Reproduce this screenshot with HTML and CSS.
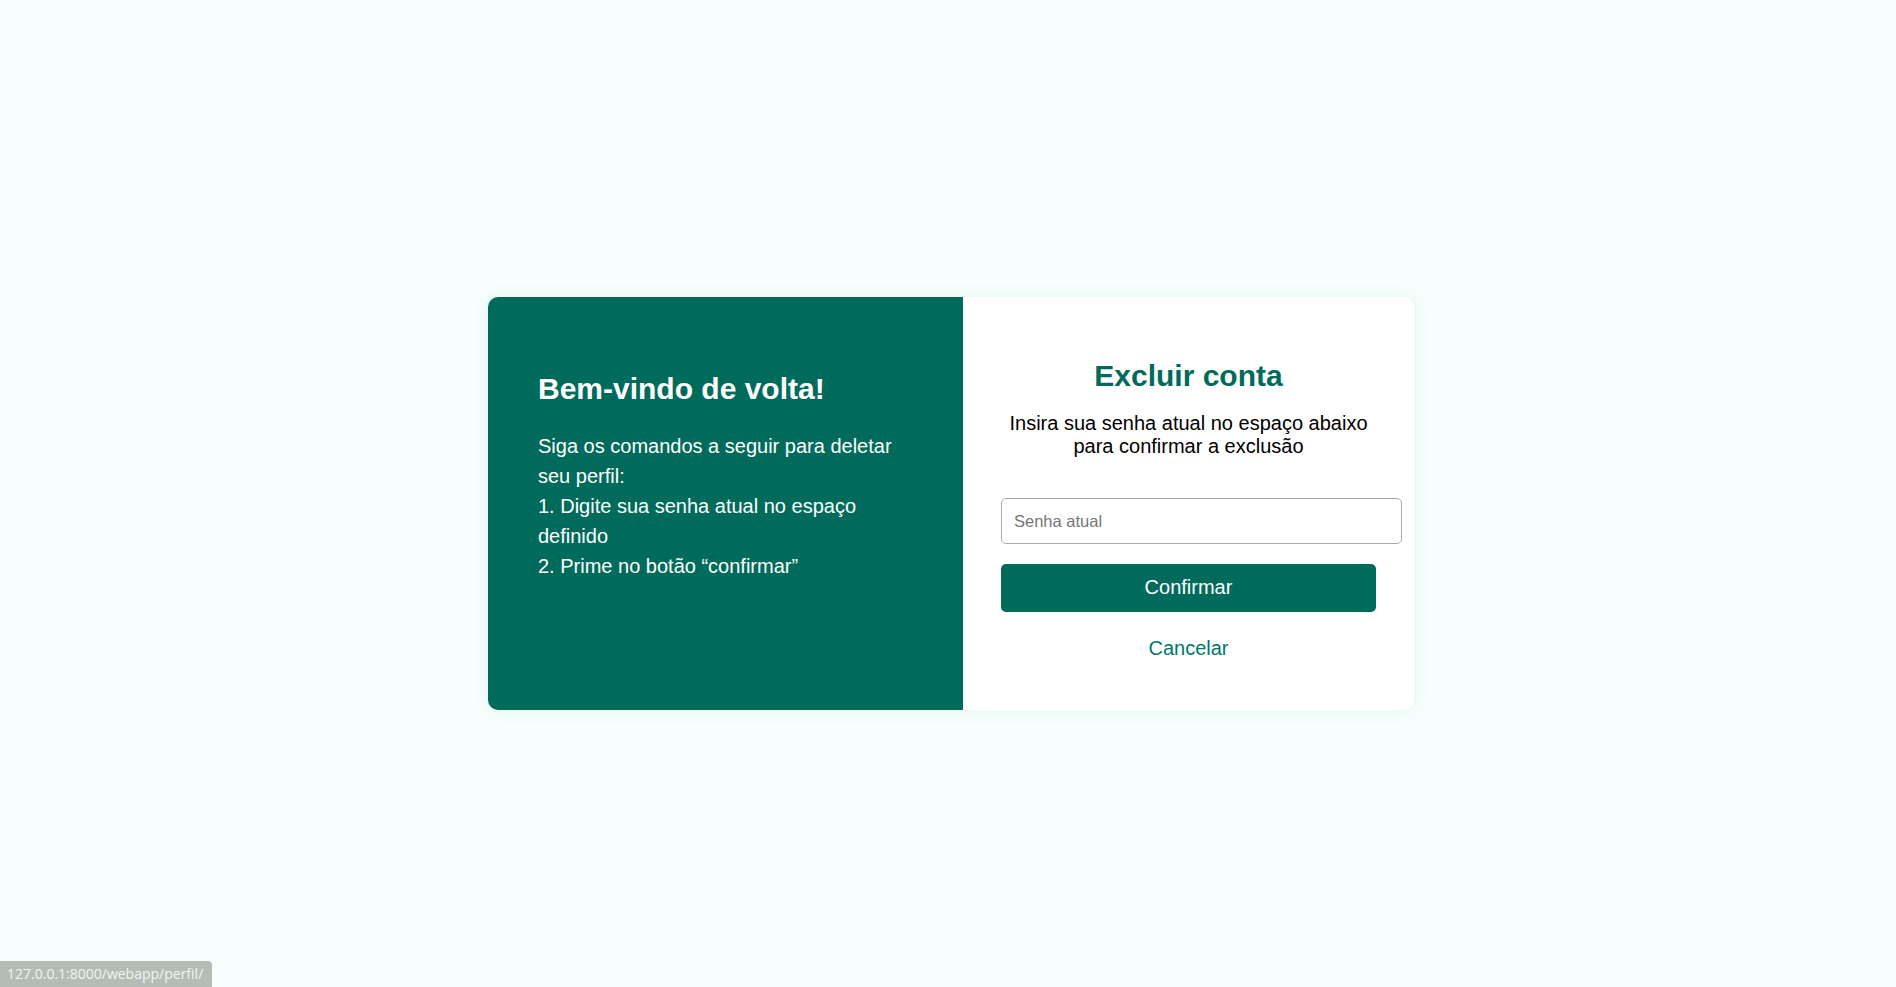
FILE: index.html
```html
<!DOCTYPE html>
<html lang="pt-BR">
<head>
<meta charset="utf-8">
<title>Excluir conta</title>
<link rel="stylesheet" href="styles.css">
</head>
<body>
<div class="page">
  <div class="card">
    <section class="panel-info">
      <h2 class="info-title">Bem-vindo de volta!</h2>
      <p class="info-text">Siga os comandos a seguir para deletar seu perfil:<br>1. Digite sua senha atual no espaço definido<br>2. Prime no botão “confirmar”</p>
    </section>
    <section class="panel-form">
      <h2 class="form-title">Excluir conta</h2>
      <p class="form-text">Insira sua senha atual no espaço abaixo para confirmar a exclusão</p>
      <form class="form" onsubmit="return false;">
        <input class="field" type="password" placeholder="Senha atual">
        <button class="btn-confirm" type="submit">Confirmar</button>
      </form>
      <a class="link-cancel" href="#">Cancelar</a>
    </section>
  </div>
</div>
<div class="status-bar">127.0.0.1:8000/webapp/perfil/</div>
</body>
</html>
```
FILE: styles.css
```css
html, body {
  margin: 0;
  padding: 0;
}
body {
  background: #f6fffd;
  font-family: "Liberation Sans", Arial, sans-serif;
}
.page {
  box-sizing: border-box;
  height: 100vh;
  padding: 20px 0 0 6px;
  display: flex;
  justify-content: center;
  align-items: center;
}
.card {
  display: flex;
  width: 926px;
  border-radius: 10px;
  overflow: hidden;
  box-shadow: 0 0 18px rgba(0, 90, 70, 0.08);
}
.panel-info {
  box-sizing: border-box;
  width: 475px;
  flex: none;
  background: #006b5b;
  color: #ffffff;
  padding: 50px;
}
.info-title {
  font-size: 30px;
  font-weight: bold;
  margin: 25px 0;
  line-height: normal;
}
.info-text {
  font-size: 20px;
  line-height: 30px;
  margin: 20px 0;
}
.panel-form {
  box-sizing: border-box;
  width: 451px;
  min-width: 0;
  flex: none;
  background: #ffffff;
  padding: 62px 38px 50px;
  text-align: center;
}
.form-title {
  font-size: 30px;
  font-weight: bold;
  color: #006b5b;
  margin: 0 0 19px;
  line-height: normal;
}
.form-text {
  font-size: 20px;
  color: #000000;
  margin: 0 0 40px;
  line-height: normal;
}
.form {
  margin: 0;
  width: 375px;
}
.field {
  display: block;
  box-sizing: content-box;
  width: 375px;
  height: 44px;
  padding: 0 12px;
  border: 1px solid #a9a9a9;
  border-radius: 5px;
  font-family: "Liberation Sans", Arial, sans-serif;
  font-size: 16.5px;
  color: #222;
  background: #ffffff;
  margin: 0 0 20px;
  outline: none;
}
.field::placeholder {
  color: #757575;
}
.btn-confirm {
  display: block;
  width: 375px;
  height: 48px;
  border: none;
  border-radius: 5px;
  background: #006b5b;
  color: #ffffff;
  font-family: "Liberation Sans", Arial, sans-serif;
  font-size: 20px;
  line-height: 46px;
  margin: 0 0 25px;
  padding: 0 0 2px;
  cursor: pointer;
}
.link-cancel {
  display: block;
  font-size: 20px;
  line-height: normal;
  color: #00776a;
  text-decoration: none;
}
.status-bar {
  position: fixed;
  left: 0;
  bottom: 0;
  height: 26px;
  padding: 0 9px 0 7px;
  background: #b3bdb6;
  color: #f2f4f2;
  font-family: "Open Sans", sans-serif;
  font-size: 14px;
  line-height: 26px;
  border-top-right-radius: 4px;
}
```
